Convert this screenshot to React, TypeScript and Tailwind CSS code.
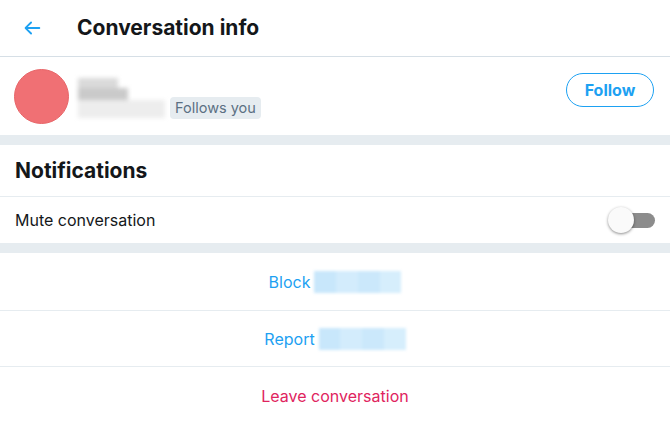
import React from 'react';

function BackArrow() {
  return (
    <svg viewBox="0 0 24 24" className="w-[22px] h-[22px]" fill="#1da1f2">
      <path d="M20 11H7.414l4.293-4.293a1 1 0 0 0-1.414-1.414l-6 6a1 1 0 0 0 0 1.414l6 6a.996.996 0 0 0 1.414 0 1 1 0 0 0 0-1.414L7.414 13H20a1 1 0 1 0 0-2z" />
    </svg>
  );
}

function Blurred() {
  return (
    <div className="w-[87px] h-[22px] bg-[#cde9fb] blur-[1.5px] flex">
      <div className="flex-1 bg-[#c8e7fb]" />
      <div className="flex-1 bg-[#d3ecfc]" />
      <div className="flex-1 bg-[#cbe8fb]" />
      <div className="flex-1 bg-[#d6eefc]" />
    </div>
  );
}

export default function App() {
  return (
    <div className="w-[670px] h-[429px] bg-white text-[#14171a] overflow-hidden" style={{ fontFamily: 'Inter, "Liberation Sans", Arial, sans-serif' }}>
      {/* Header */}
      <div className="h-[57px] flex items-center border-b border-[#d6dfe6]">
        <div className="w-[77px] pl-[21px] flex items-center">
          <BackArrow />
        </div>
        <h1 className="text-[21px] font-bold">Conversation info</h1>
      </div>

      {/* Profile */}
      <div className="h-[78px] flex items-center px-[14px]">
        <div className="w-[55px] h-[55px] rounded-full bg-[#f07074] border border-[#e86568]" />
        <div className="ml-[9px] w-[87px] h-[45px] flex flex-col blur-[2px]">
          <div className="h-[10px] w-[40px] bg-[#dadada] mt-[4px]" />
          <div className="h-[12px] w-[50px] bg-[#cacaca]" />
          <div className="h-[18px] w-[87px] bg-[#ededed]" />
        </div>
        <span className="ml-[5px] mt-[23px] px-[5px] h-[22px] leading-[22px] rounded-[4px] bg-[#e6ecf0] text-[#5b7083] text-[14.5px]">Follows you</span>
        <div className="flex-1" />
        <button className="mr-[2px] mb-[12px] h-[34px] w-[88px] rounded-full border border-[#1da1f2] text-[#1da1f2] text-[16px] font-bold">Follow</button>
      </div>

      <div className="h-[10px] bg-[#e6ecf0]" />

      {/* Notifications */}
      <div className="h-[52px] flex items-center px-[15px] border-b border-[#e6ecf0]">
        <h2 className="text-[21px] font-bold">Notifications</h2>
      </div>
      <div className="h-[46px] flex items-center justify-between pl-[15px] pr-[15px]">
        <span className="text-[16px]">Mute conversation</span>
        <div className="relative w-[47px] h-[26px] flex items-center">
          <div className="ml-[12px] w-[35px] h-[15px] rounded-full bg-[#8c8c8c]" />
          <div className="absolute left-0 top-0 w-[26px] h-[26px] rounded-full bg-[#fafafa] shadow-[0_1px_3px_rgba(0,0,0,0.45)]" />
        </div>
      </div>

      <div className="h-[10px] bg-[#e6ecf0]" />

      {/* Actions */}
      <div className="h-[58px] flex items-center justify-center gap-[4px] border-b border-[#e6ecf0] text-[#1da1f2] text-[16px]">
        <span>Block</span>
        <Blurred />
      </div>
      <div className="h-[56px] flex items-center justify-center gap-[4px] border-b border-[#e6ecf0] text-[#1da1f2] text-[16px]">
        <span>Report</span>
        <Blurred />
      </div>
      <div className="h-[57px] flex items-center justify-center text-[#e0245e] text-[16px]">
        <span>Leave conversation</span>
      </div>
    </div>
  );
}
